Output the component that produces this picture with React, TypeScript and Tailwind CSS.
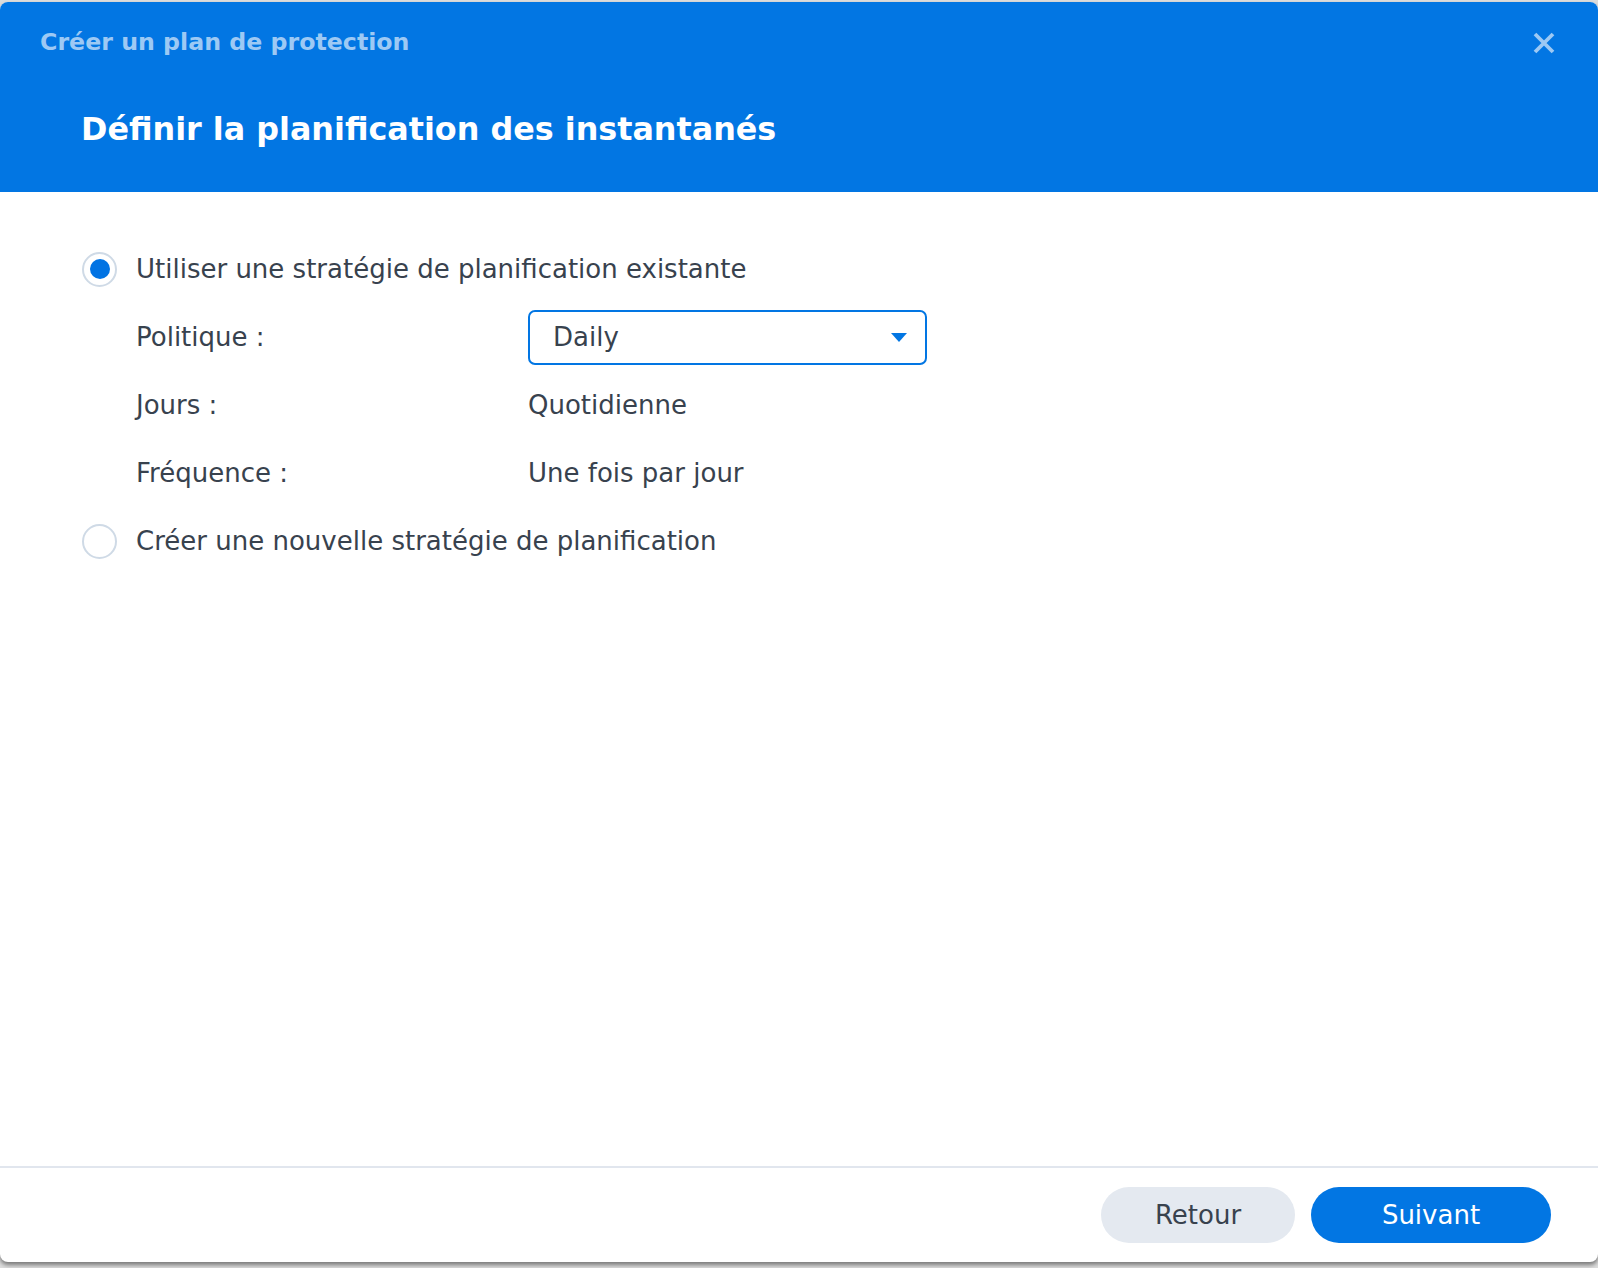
import React, { useState } from 'react';

const font = { fontFamily: '"DejaVu Sans", Verdana, sans-serif' };

const Radio = ({ checked, onClick }: { checked: boolean; onClick: () => void }) => (
  <button
    onClick={onClick}
    className="w-[35px] h-[35px] rounded-full border-2 border-[#cfdae6] bg-white flex items-center justify-center shrink-0"
  >
    {checked && <span className="w-[20px] h-[20px] rounded-full bg-[#0173e3]" />}
  </button>
);

export default function App() {
  const [mode, setMode] = useState<'existing' | 'new'>('existing');

  return (
    <div className="w-[1598px] h-[1268px] bg-[#dcdcdc] pt-[2px] overflow-hidden" style={font}>
      <div className="h-[1260px] bg-white rounded-[8px] flex flex-col shadow-[0_3px_4px_rgba(0,0,0,0.45)]">
        {/* Header */}
        <div className="h-[190px] bg-[#0276e3] rounded-t-[8px] relative shrink-0">
          <div className="pl-[40px] pt-[24px] text-[23.7px] leading-[32px] font-bold text-[#9dc9f4]">
            Créer un plan de protection
          </div>
          <div className="pl-[81px] pt-[51px] text-[31.8px] leading-[40px] font-bold text-white">
            Définir la planification des instantanés
          </div>
          <button className="absolute right-[42px] top-[29px] w-[24px] h-[24px] flex items-center justify-center">
            <svg width="22" height="22" viewBox="0 0 22 22">
              <path d="M2 2 L20 20 M20 2 L2 20" stroke="#9dc9f4" strokeWidth="3.8" strokeLinecap="butt" />
            </svg>
          </button>
        </div>

        {/* Content */}
        <div className="flex-1 pl-[82px] pt-[43px] text-[#38424e] text-[26px]">
          <div className="flex items-center gap-[19px] h-[68px]">
            <Radio checked={mode === 'existing'} onClick={() => setMode('existing')} />
            <span>Utiliser une stratégie de planification existante</span>
          </div>

          <div className="pl-[54px]">
            <div className="grid grid-cols-[392px_400px] items-center">
              <div className="h-[68px] flex items-center">Politique :</div>
              <div className="h-[68px] flex items-center">
                <div className="w-[399px] h-[55px] border-2 border-[#0276e3] rounded-[7px] flex items-center justify-between pl-[23px] pr-[18px]">
                  <span>Daily</span>
                  <svg width="16" height="9" viewBox="0 0 16 9">
                    <path d="M0 0 L16 0 L8 9 Z" fill="#0276e3" />
                  </svg>
                </div>
              </div>
              <div className="h-[68px] flex items-center">Jours :</div>
              <div className="h-[68px] flex items-center">Quotidienne</div>
              <div className="h-[68px] flex items-center">Fréquence :</div>
              <div className="h-[68px] flex items-center">Une fois par jour</div>
            </div>
          </div>

          <div className="flex items-center gap-[19px] h-[68px]">
            <Radio checked={mode === 'new'} onClick={() => setMode('new')} />
            <span>Créer une nouvelle stratégie de planification</span>
          </div>
        </div>

        {/* Footer */}
        <div className="h-[96px] border-t-2 border-[#e1e6ee] flex items-start justify-end gap-[16px] pr-[47px] pt-[19px] shrink-0">
          <button className="w-[194px] h-[56px] rounded-full bg-[#e4e9f0] text-[#38424e] text-[26px]">
            Retour
          </button>
          <button className="w-[240px] h-[56px] rounded-full bg-[#0276e3] text-white text-[26px]">
            Suivant
          </button>
        </div>
      </div>
    </div>
  );
}
